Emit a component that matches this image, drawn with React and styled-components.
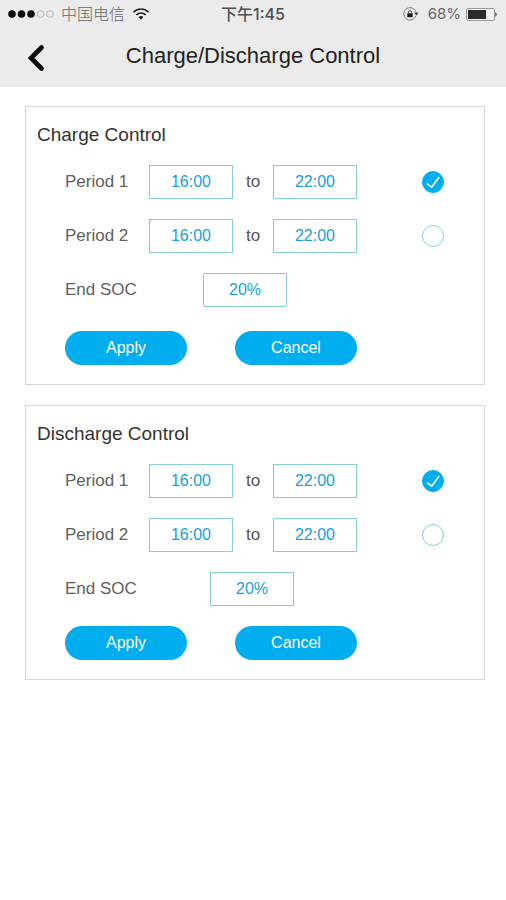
import React, { useState } from "react";
import styled, { createGlobalStyle } from "styled-components";

const GlobalStyle = createGlobalStyle`
  * { box-sizing: border-box; }
  body {
    margin: 0;
    background: #fff;
    font-family: "Liberation Sans", Arial, sans-serif;
    color: #555;
  }
`;

const Top = styled.div`
  background: #ebebeb;
`;

const StatusBar = styled.div`
  display: grid;
  grid-template-columns: 1fr auto 1fr;
  align-items: center;
  height: 28px;
  padding: 0 8px;
  font-family: Inter, "Noto Sans CJK SC", sans-serif;
  font-size: 16px;
  line-height: 28px;
  color: #666;
`;

const Carrier = styled.div`
  display: flex;
  align-items: center;
  gap: 7px;
  font-weight: 300;
`;

const Clock = styled.time`
  font-weight: 500;
  color: #505050;
`;

const Power = styled.div`
  display: flex;
  align-items: center;
  justify-content: flex-end;
  gap: 5px;
  font-size: 15px;
`;

const Rotation = styled.span`
  display: flex;
  margin-right: 4px;
`;

const NavBar = styled.header`
  display: grid;
  grid-template-columns: 48px 1fr 48px;
  align-items: center;
  height: 59px;
`;

const BackButton = styled.button`
  display: flex;
  justify-content: flex-end;
  padding: 0 2px 0 0;
  border: 0;
  background: none;
  cursor: pointer;
`;

const PageTitle = styled.h1`
  margin: 0;
  font-size: 22px;
  line-height: 28px;
  font-weight: 400;
  text-align: center;
  color: #222;
  padding-bottom: 4px;
`;

const Panels = styled.main`
  display: flex;
  flex-direction: column;
  gap: 20px;
  padding: 19px 21px 20px 25px;
`;

const Panel = styled.form`
  padding: 16px 40px 19px 39px;
  border: 1px solid #d6d6d6;
`;

const PanelTitle = styled.h2`
  margin: 0 0 18px -28px;
  font-size: 19px;
  line-height: 24px;
  font-weight: 400;
  color: #333;
`;

const Rows = styled.div`
  display: flex;
  flex-direction: column;
  gap: 20px;
`;

const Row = styled.div`
  display: flex;
  align-items: center;
  font-size: 17px;
  line-height: 34px;
`;

const RowLabel = styled.label`
  width: ${(p) => p.$width}px;
  color: #606060;
`;

const To = styled.span`
  width: 40px;
  text-align: center;
`;

const Field = styled.input`
  width: 84px;
  height: 34px;
  padding: 0;
  border: 1px solid #83cddb;
  border-radius: ${(p) => (p.$rounded ? 2 : 0)}px;
  background: #fff;
  font: inherit;
  font-size: 16px;
  text-align: center;
  color: #18a0d9;
`;

const Toggle = styled.span`
  display: grid;
  width: 22px;
  height: 22px;
  margin-left: auto;

  > * { grid-area: 1 / 1; }
  svg { pointer-events: none; }
`;

const Tick = styled.input`
  appearance: none;
  width: 22px;
  height: 22px;
  margin: 0;
  border: 1px solid #85cddc;
  border-radius: 50%;
  background: #fff;
  cursor: pointer;

  &:checked {
    border-color: #00aeef;
    background: #00aeef;
  }
`;

const Actions = styled.div`
  display: flex;
  gap: 48px;
  margin-top: ${(p) => p.$gap}px;
`;

const Pill = styled.button`
  width: 122px;
  height: 34px;
  padding: 0;
  border: 0;
  border-radius: 17px;
  background: #00aeef;
  font: inherit;
  font-size: 16px;
  color: #fff;
  cursor: pointer;
`;

function SignalDots() {
  return (
    <svg width="46" height="10" viewBox="0 0 46 10" aria-hidden="true">
      {[4, 13.5, 23].map((x) => (
        <circle key={x} cx={x} cy="5" r="3.8" fill="#0c0c0c" />
      ))}
      {[32.5, 42].map((x) => (
        <circle key={x} cx={x} cy="5" r="3.4" fill="none" stroke="#a9a9a9" strokeWidth="0.8" />
      ))}
    </svg>
  );
}

function Wifi() {
  return (
    <svg width="18" height="14" viewBox="0 0 18 14" fill="none" stroke="#222" strokeWidth="1.7" aria-hidden="true">
      <path d="M1.5 5.2C5.8 0.9 12.2 0.9 16.5 5.2" />
      <path d="M4.3 8C7 5.3 11 5.3 13.7 8" />
      <path d="M6.6 10.1Q9 8 11.4 10.1L9 12.8Z" fill="#222" stroke="none" />
    </svg>
  );
}

function RotationLock() {
  return (
    <svg width="16" height="14" viewBox="0 0 16 14" fill="none" aria-hidden="true">
      <path d="M12.9 8.9A6.2 6.2 0 1 1 13.2 6.2" stroke="#777" strokeWidth="1" />
      <path d="M11.2 5.7H15.6L13.4 8.5Z" fill="#333" />
      <rect x="4.3" y="6.3" width="5.4" height="3.9" fill="#1c1c1c" />
      <path d="M5.4 6.5V5.2A1.6 1.6 0 0 1 8.6 5.2V6.5" stroke="#444" strokeWidth="0.9" />
    </svg>
  );
}

function Battery() {
  return (
    <svg width="32" height="13" viewBox="0 0 32 13" aria-hidden="true">
      <rect x="0.5" y="0.5" width="28" height="12" rx="1.5" fill="#f3f3f3" stroke="#999" />
      <rect x="2" y="2" width="18" height="9" fill="#2b2b2b" />
      <path d="M29 4Q33 6.5 29 9Z" fill="#777" />
    </svg>
  );
}

function PeriodRow({ id, name, defaultOn }) {
  const [on, setOn] = useState(defaultOn);
  return (
    <Row>
      <RowLabel $width={84} htmlFor={`${id}-from`}>{name}</RowLabel>
      <Field id={`${id}-from`} defaultValue="16:00" />
      <To>to</To>
      <Field aria-label={`${name} end`} defaultValue="22:00" />
      <Toggle>
        <Tick
          type="checkbox"
          aria-label={`Enable ${name}`}
          checked={on}
          onChange={(e) => setOn(e.target.checked)}
        />
        {on && (
          <svg width="22" height="22" viewBox="0 0 22 22" fill="none" stroke="#fff" strokeWidth="1.6" aria-hidden="true">
            <path d="M5 12.6L9.8 16.2L17.2 6" />
          </svg>
        )}
      </Toggle>
    </Row>
  );
}

function ControlPanel({ id, title, socLabelWidth, actionsGap, rounded }) {
  return (
    <Panel aria-label={title} onSubmit={(e) => e.preventDefault()}>
      <PanelTitle>{title}</PanelTitle>
      <Rows>
        <PeriodRow id={`${id}-1`} name="Period 1" defaultOn />
        <PeriodRow id={`${id}-2`} name="Period 2" defaultOn={false} />
        <Row>
          <RowLabel $width={socLabelWidth} htmlFor={`${id}-soc`}>End SOC</RowLabel>
          <Field id={`${id}-soc`} defaultValue="20%" $rounded={rounded} />
        </Row>
      </Rows>
      <Actions $gap={actionsGap}>
        <Pill type="submit">Apply</Pill>
        <Pill type="reset">Cancel</Pill>
      </Actions>
    </Panel>
  );
}

export default function App() {
  return (
    <>
      <GlobalStyle />
      <Top>
        <StatusBar>
          <Carrier>
            <SignalDots />
            <span>中国电信</span>
            <Wifi />
          </Carrier>
          <Clock>下午1:45</Clock>
          <Power>
            <Rotation><RotationLock /></Rotation>
            <span>68%</span>
            <Battery />
          </Power>
        </StatusBar>
        <NavBar>
          <BackButton type="button" aria-label="Back">
            <svg width="20" height="28" viewBox="0 0 20 28" fill="none" stroke="#0a0a0a" strokeWidth="4.6" aria-hidden="true">
              <path d="M15.5 3.5L5 14L15.5 24.5" strokeLinecap="round" />
            </svg>
          </BackButton>
          <PageTitle>Charge/Discharge Control</PageTitle>
        </NavBar>
      </Top>
      <Panels>
        <ControlPanel id="charge" title="Charge Control" socLabelWidth={138} actionsGap={24} rounded />
        <ControlPanel id="discharge" title="Discharge Control" socLabelWidth={145} actionsGap={20} />
      </Panels>
    </>
  );
}
